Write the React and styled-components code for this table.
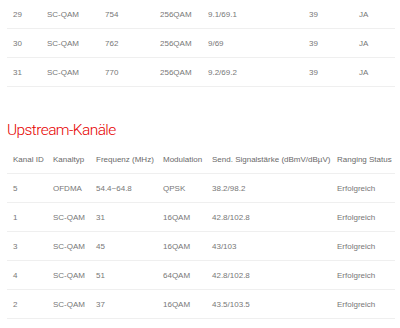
import React from "react";
import styled, { createGlobalStyle } from "styled-components";

const Global = createGlobalStyle`
  body {
    margin: 0;
    background: #fff;
    font-family: "Liberation Sans", Arial, sans-serif;
  }
`;

const Page = styled.div`
  padding: 0 5px 0 7px;
  display: flex;
  flex-direction: column;
`;

const Title = styled.h2`
  margin: 33px 0 5px;
  font-family: Roboto, sans-serif;
  font-weight: 300;
  font-size: 15.5px;
  letter-spacing: -0.6px;
  line-height: 20px;
  color: #e60000;
`;

const Table = styled.div`
  display: flex;
  flex-direction: column;
`;

const Row = styled.div`
  display: grid;
  grid-template-columns: ${(p) => p.cols};
  height: 28px;
  align-items: center;
  border-bottom: 1px solid #efefef;
`;

const Cell = styled.span`
  padding-left: 6px;
  font-size: 8px;
  color: ${(p) => (p.head ? "#6a6a6a" : "#777")};
  white-space: nowrap;
`;

const downCols = "34px 58px 55px 48px 101px 50px 42px";
const upCols = "40px 43px 67px 49px 125px 64px";

const downstream = [
  ["29", "SC-QAM", "754", "256QAM", "9.1/69.1", "39", "JA"],
  ["30", "SC-QAM", "762", "256QAM", "9/69", "39", "JA"],
  ["31", "SC-QAM", "770", "256QAM", "9.2/69.2", "39", "JA"],
];

const upHead = [
  "Kanal ID",
  "Kanaltyp",
  "Frequenz (MHz)",
  "Modulation",
  "Send. Signalstärke (dBmV/dBµV)",
  "Ranging Status",
];

const upstream = [
  ["5", "OFDMA", "54.4~64.8", "QPSK", "38.2/98.2", "Erfolgreich"],
  ["1", "SC-QAM", "31", "16QAM", "42.8/102.8", "Erfolgreich"],
  ["3", "SC-QAM", "45", "16QAM", "43/103", "Erfolgreich"],
  ["4", "SC-QAM", "51", "64QAM", "42.8/102.8", "Erfolgreich"],
  ["2", "SC-QAM", "37", "16QAM", "43.5/103.5", "Erfolgreich"],
];

export default function App() {
  return (
    <>
      <Global />
      <Page>
        <Table>
          {downstream.map((r) => (
            <Row cols={downCols} key={r[0]}>
              {r.map((c, i) => (
                <Cell key={i}>{c}</Cell>
              ))}
            </Row>
          ))}
        </Table>
        <Title>Upstream-Kanäle</Title>
        <Table>
          <Row cols={upCols}>
            {upHead.map((h) => (
              <Cell head key={h}>{h}</Cell>
            ))}
          </Row>
          {upstream.map((r) => (
            <Row cols={upCols} key={r[0]}>
              {r.map((c, i) => (
                <Cell key={i}>{c}</Cell>
              ))}
            </Row>
          ))}
        </Table>
      </Page>
    </>
  );
}
